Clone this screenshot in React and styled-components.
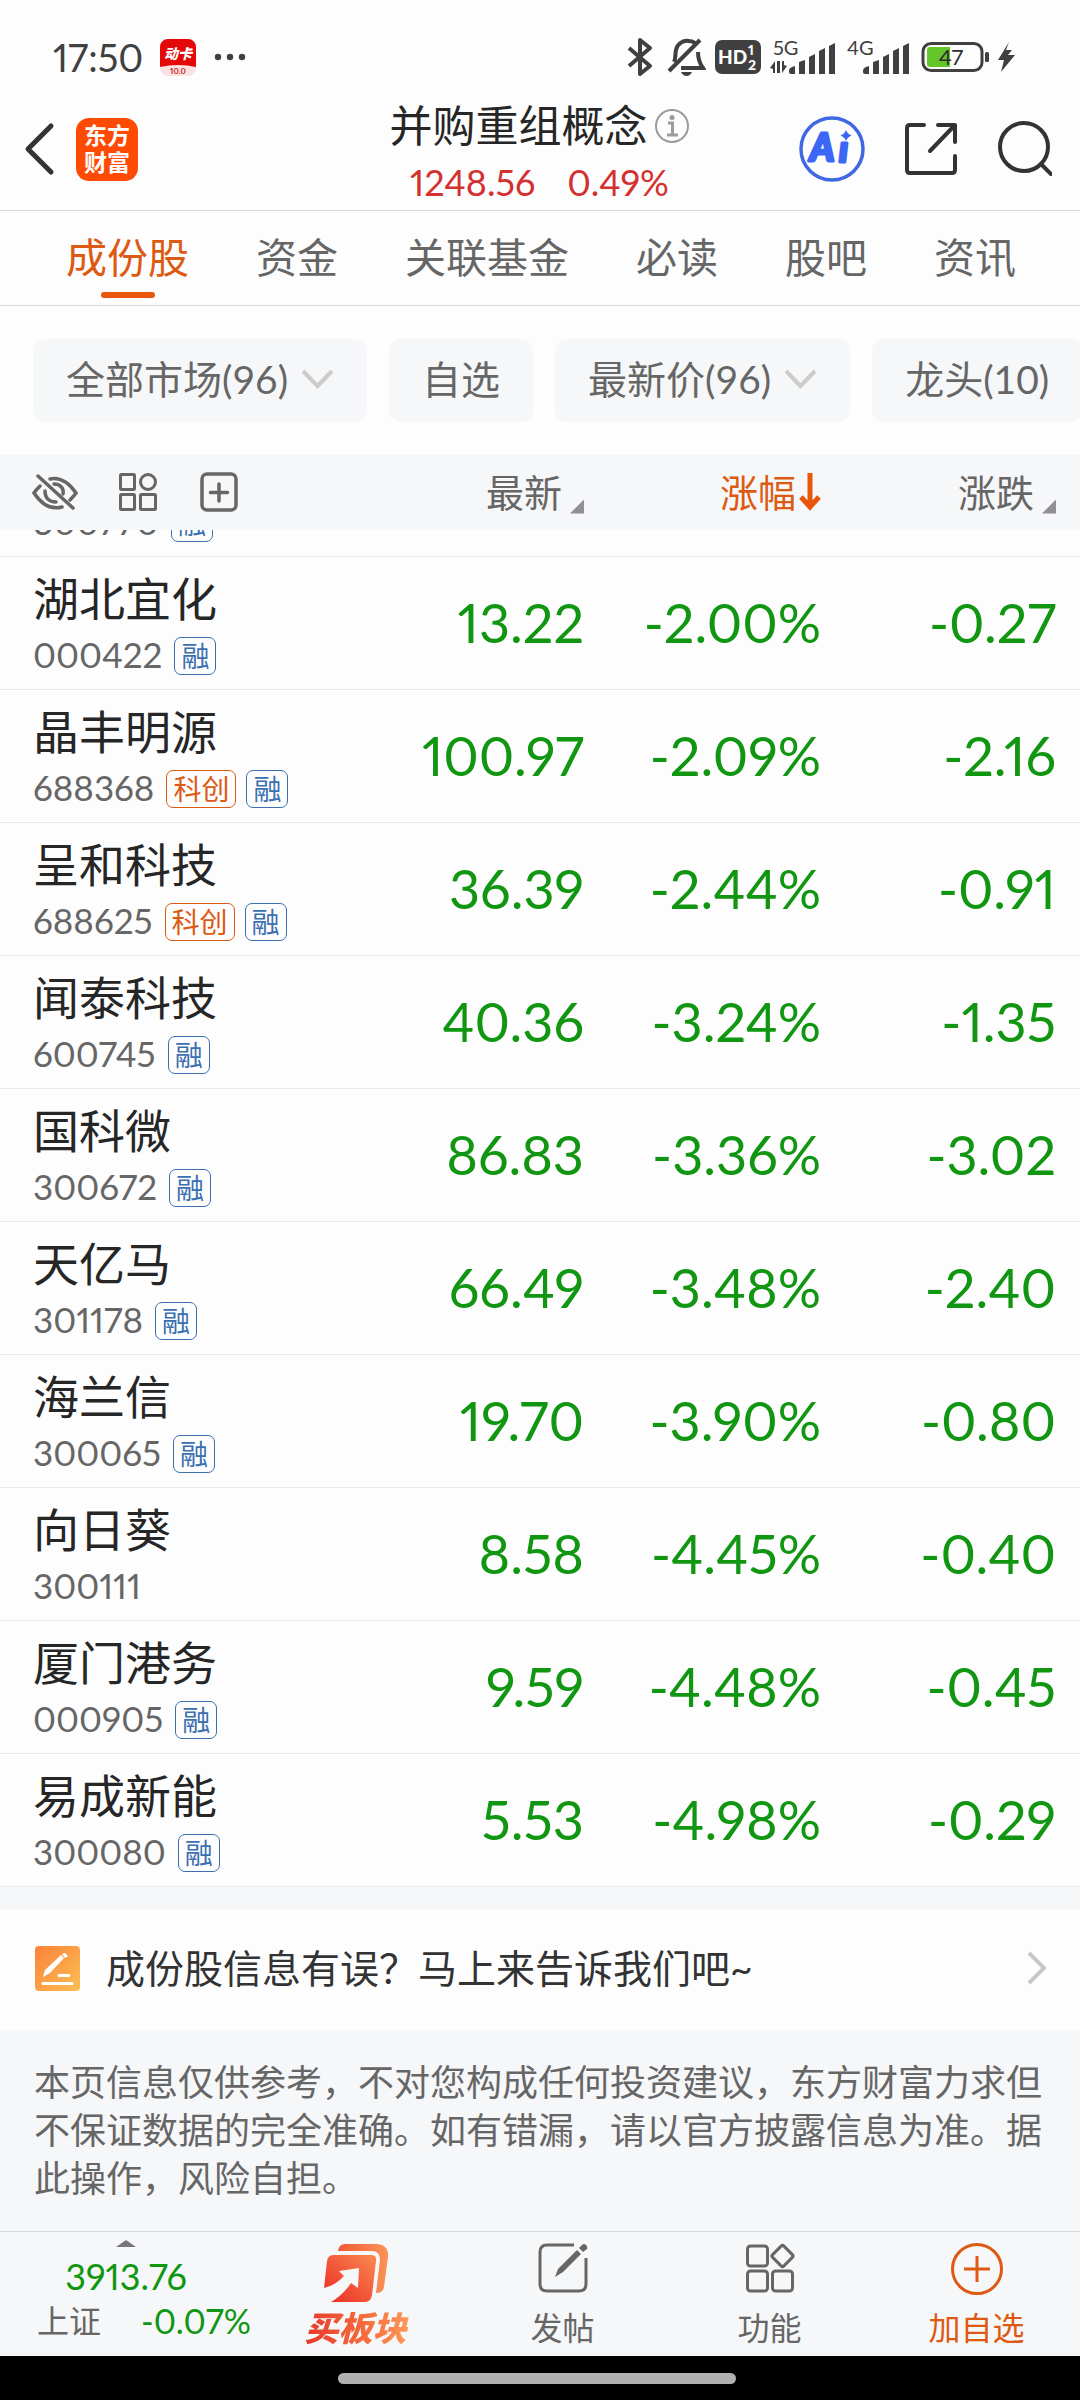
import React from "react";
import styled, { createGlobalStyle } from "styled-components";

const color = {
  ink: "#262626",
  gray: "#666666",
  line: "#d6d7d9",
  rowLine: "#e9eaec",
  panel: "#f6f7f9",
  orange: "#dd5a12",
  green: "#119611",
  red: "#d3302f",
  blue: "#3a6fb0",
  status: "#404040",
};

const GlobalStyle = createGlobalStyle`
  * { box-sizing: border-box; }
  body {
    margin: 0;
    background: #fdfdfe;
    color: ${color.ink};
    font-family: Lato, "Noto Sans CJK SC", sans-serif;
    font-variant-numeric: proportional-nums;
  }
  button {
    margin: 0;
    padding: 0;
    border: 0;
    background: none;
    color: inherit;
    font: inherit;
    font-variant-numeric: inherit;
    white-space: nowrap;
  }
  a { color: inherit; text-decoration: none; }
  svg { display: block; flex: none; }
`;

const Page = styled.div`
  width: 100%;
  overflow: hidden;
`;

/* ---------- status bar ---------- */

const StatusBar = styled.div`
  display: flex;
  justify-content: space-between;
  align-items: center;
  height: 90px;
  padding: 24px 64px 0 53px;
  color: ${color.status};
`;

const StatusGroup = styled.div`
  display: flex;
  align-items: center;
  gap: ${(p) => p.$gap}px;
`;

const Clock = styled.time`
  font-size: 38px;
  line-height: 40px;
`;

function StatusLeft() {
  return (
    <StatusGroup $gap={17}>
      <Clock>17:50</Clock>
      <svg width="36" height="37" viewBox="0 0 36 37">
        <rect width="36" height="37" rx="8" fill="#fbe3e3" />
        <path d="M8 0H28a8 8 0 0 1 8 8V28Q18 24 0 28V8a8 8 0 0 1 8-8Z" fill="#e40808" />
        <text x="18" y="20" fontSize="14" fontWeight="900" fontStyle="italic" fill="#fff" textAnchor="middle">动卡</text>
        <text x="18" y="35" fontSize="8" fontWeight="700" fill="#d01818" textAnchor="middle">10.0</text>
      </svg>
      <svg width="36" height="8" viewBox="0 0 36 8" fill={color.status}>
        <circle cx="5" cy="4" r="3.2" />
        <circle cx="17" cy="4" r="3.2" />
        <circle cx="29" cy="4" r="3.2" />
      </svg>
    </StatusGroup>
  );
}

function Signal({ label, busy }) {
  return (
    <svg width="66" height="48" viewBox="0 -6 66 48" fill={color.status}>
      <text x="3" y="16" fontSize="20">{label}</text>
      {busy && (
        <path d="M5 22v12h-2v-4l-3-1 5-7Zm2 0 3 0v12H7ZM12 34V22h2v4l3 1-5 7Z" />
      )}
      <path d="M19 32q0-3 3-4l3-1v8h-4q-2 0-2-2Z" />
      <path d="M29 23l6-2v14h-6Z" />
      <path d="M39 18l6-3v20h-6Z" />
      <path d="M49 12l6-3v26h-6Z" />
      <path d="M59 7l6-3v31h-6Z" />
    </svg>
  );
}

function StatusRight() {
  return (
    <StatusGroup $gap={8}>
      <svg width="32" height="40" viewBox="0 0 32 40" fill="none" stroke={color.status} strokeWidth="4" strokeLinejoin="round">
        <path d="M3 11 24 29 14 37V3L24 11 3 29" />
      </svg>
      <svg width="40" height="40" viewBox="0 0 40 40" fill="none" stroke={color.status} strokeWidth="4">
        <path d="M8 25C10 21 9 17 10 13c1-6 7-10 13-9 3 0 5 1 7 3M32 15c0 8 2 12 5 16H15" />
        <path d="M3 34 34 3" />
        <path d="M15 35h11q-2 4-5.500 4T15 35Z" fill={color.status} stroke="none" />
      </svg>
      <svg width="48" height="34" viewBox="0 0 48 34">
        <rect x="1" width="46" height="34" rx="7" fill={color.status} />
        <text x="4" y="24" fontSize="19" fontWeight="900" fill="#fff">HD</text>
        <text x="34" y="15" fontSize="14" fontWeight="900" fill="#fff">1</text>
        <text x="34" y="30" fontSize="14" fontWeight="900" fill="#fff">2</text>
      </svg>
      <Signal label="5G" busy />
      <Signal label="4G" />
      <svg width="98" height="34" viewBox="0 0 98 34">
        <rect x="5" y="3.500" width="59" height="27" rx="8" fill="none" stroke={color.status} strokeWidth="3" />
        <path d="M12 7H32V27H12q-3 0-3-3V10q0-3 3-3Z" fill="#63c62b" />
        <text x="33" y="25" fontSize="22" fill="#2c2c2c" textAnchor="middle">47</text>
        <rect x="67" y="12" width="4" height="10" rx="1.500" fill={color.status} />
        <path d="M91 2 80 20h6l-3 12 14-17h-7l4-5h-6Z" fill={color.status} />
      </svg>
    </StatusGroup>
  );
}

/* ---------- title bar ---------- */

const TitleBar = styled.header`
  display: grid;
  grid-template-columns: 1fr auto 1fr;
  align-items: center;
  height: 121px;
  padding: 0 28px 2px 24px;
  border-bottom: 1px solid ${color.line};
`;

const Tools = styled.div`
  display: flex;
  align-items: center;
  justify-content: ${(p) => (p.$end ? "flex-end" : "flex-start")};
  gap: ${(p) => (p.$end ? 38 : 20)}px;
`;

const BrandLogo = styled.span`
  display: grid;
  place-content: center;
  width: 62px;
  height: 63px;
  border-radius: 13px;
  background: #ff4a04;
  color: #fff;
  font-size: 23px;
  font-weight: 700;
  line-height: 27px;
  text-align: center;
`;

const TitleBlock = styled.div`
  display: flex;
  flex-direction: column;
  align-items: center;
  gap: 8px;
  padding: 2px 0 0 3px;
`;

const TitleLine = styled.div`
  display: flex;
  align-items: center;
  gap: 6px;
`;

const Title = styled.h1`
  margin: 0;
  font-size: 43px;
  font-weight: 400;
  line-height: 56px;
`;

const Quote = styled.div`
  display: flex;
  gap: 32px;
  color: ${color.red};
  font-size: 36px;
  line-height: 40px;
`;

function Header() {
  return (
    <TitleBar>
      <Tools>
        <button aria-label="返回">
          <svg width="32" height="56" viewBox="0 0 32 56" fill="none" stroke="#333" strokeWidth="5" strokeLinecap="round" strokeLinejoin="round">
            <path d="M27 5 4 28 27 51" />
          </svg>
        </button>
        <BrandLogo>东方<br />财富</BrandLogo>
      </Tools>
      <TitleBlock>
        <TitleLine>
          <Title>并购重组概念</Title>
          <button aria-label="说明">
            <svg width="36" height="36" viewBox="0 0 36 36" fill="none" stroke="#9b9b9b" strokeWidth="2">
              <circle cx="18" cy="18" r="16" />
              <circle cx="18" cy="9.500" r="2.500" fill="#9b9b9b" stroke="none" />
              <path d="M14 15h4.500v11M13 27h11" strokeWidth="3" />
            </svg>
          </button>
        </TitleLine>
        <Quote>
          <span>1248.56</span>
          <span>0.49%</span>
        </Quote>
      </TitleBlock>
      <Tools $end>
        <button aria-label="Ai">
          <svg width="68" height="68" viewBox="0 0 68 68">
            <circle cx="34" cy="34" r="31" fill="none" stroke="#4068e2" strokeWidth="3.500" />
            <g fill="#3c66f5" stroke="#3c66f5" strokeWidth="3" strokeLinejoin="round" fontWeight="900" fontStyle="italic">
              <text x="12" y="46" fontSize="37">A</text>
              <text x="41" y="47" fontSize="36">ı</text>
            </g>
            <path d="M48 15q1.500 4 5.500 5.500-4 1.500-5.500 5.500-1.500-4-5.500-5.500 4-1.500 5.500-5.500Z" fill="#3c66f5" />
          </svg>
        </button>
        <button aria-label="分享">
          <svg width="54" height="54" viewBox="0 0 54 54" fill="none" stroke="#333" strokeWidth="4" strokeLinecap="round" strokeLinejoin="round">
            <path d="M20 3H6q-3 0-3 3V48q0 3 3 3H48q3 0 3-3V34" />
            <path d="M34 3H51V20M51 3 26 29" />
          </svg>
        </button>
        <button aria-label="搜索">
          <svg width="56" height="56" viewBox="0 0 56 56" fill="none" stroke="#333" strokeWidth="4" strokeLinecap="round">
            <circle cx="28" cy="26" r="24" />
            <path d="M45 43 55 53" />
          </svg>
        </button>
      </Tools>
    </TitleBar>
  );
}

/* ---------- tabs and filters ---------- */

const TabBar = styled.nav`
  display: flex;
  gap: 67px;
  padding: 18px 66px 7px;
  border-bottom: 1px solid ${color.line};
`;

const Tab = styled.button`
  display: flex;
  flex-direction: column;
  align-items: center;
  gap: 5px;
  color: ${(p) => (p.$active ? color.orange : color.gray)};
  font-size: 41px;
  line-height: 58px;

  &::after {
    content: "";
    width: 54px;
    height: 6px;
    border-radius: 3px;
    background: ${(p) => (p.$active ? "#e8560a" : "transparent")};
  }
`;

const FilterBar = styled.div`
  display: flex;
  gap: 22px;
  padding: 33px 0 33px 33px;
  overflow: hidden;
`;

const Chip = styled.button`
  display: flex;
  flex: none;
  align-items: center;
  gap: 13px;
  height: 83px;
  padding: 0 33px 3px;
  border-radius: 12px;
  background: ${color.panel};
  color: ${color.gray};
  font-size: 39px;
  font-variant-numeric: tabular-nums;
  line-height: 48px;
`;

const TABS = ["成份股", "资金", "关联基金", "必读", "股吧", "资讯"];
const FILTERS = [
  { label: "全部市场(96)", menu: true },
  { label: "自选" },
  { label: "最新价(96)", menu: true },
  { label: "龙头(10)" },
];

/* ---------- stock table ---------- */

const Table = styled.table`
  width: 100%;
  border-spacing: 0;
  table-layout: fixed;
`;

const Col = styled.col`
  width: ${(p) => p.$width};
`;

const HeadCell = styled.th`
  height: 75px;
  padding: 0 ${(p) => (p.$last ? 24 : 0)}px 2px ${(p) => (p.$first ? 32 : 0)}px;
  background: ${color.panel};
  color: ${color.gray};
  font-size: 38px;
  font-weight: 400;
`;

const HeadTools = styled.div`
  display: flex;
  align-items: center;
  gap: 41px;
`;

const SortButton = styled.button`
  display: flex;
  align-items: center;
  justify-content: flex-end;
  gap: ${(p) => (p.$active ? 3 : 8)}px;
  width: 100%;
  color: ${(p) => (p.$active ? color.orange : color.gray)};
  line-height: 44px;
`;

const SortCorner = styled.span`
  align-self: flex-end;
  width: 14px;
  height: 14px;
  background: #8f8f94;
  clip-path: polygon(100% 0, 100% 100%, 0 100%);
`;

const Cell = styled.td`
  padding: 0 ${(p) => (p.$last ? 24 : 0)}px 0 ${(p) => (p.$first ? 33 : 0)}px;
  border-bottom: 1px solid ${color.rowLine};
`;

const Price = styled(Cell)`
  color: ${color.green};
  font-size: 54px;
  line-height: 64px;
  text-align: right;
`;

const Peek = styled.div`
  display: flex;
  align-items: flex-end;
  height: 26px;
  overflow: hidden;
`;

const Stock = styled.div`
  display: flex;
  flex-direction: column;
  gap: 11px;
  padding: 15px 0 14px;
`;

const StockName = styled.span`
  font-size: 46px;
  line-height: 54px;
`;

const StockMeta = styled.div`
  display: flex;
  align-items: flex-start;
  gap: 10px;
  height: 38px;
`;

const Code = styled.span`
  padding-right: 2px;
  color: ${color.gray};
  font-size: 35px;
  line-height: 34px;
`;

const Badge = styled.span`
  padding: 0 6px;
  border: 1px solid;
  border-radius: 7px;
  color: ${(p) => (p.$orange ? color.orange : color.blue)};
  font-size: 28px;
  line-height: 36px;
`;

const STOCKS = [
  ["湖北宜化", "000422", ["融"], "13.22", "-2.00%", "-0.27"],
  ["晶丰明源", "688368", ["科创", "融"], "100.97", "-2.09%", "-2.16"],
  ["呈和科技", "688625", ["科创", "融"], "36.39", "-2.44%", "-0.91"],
  ["闻泰科技", "600745", ["融"], "40.36", "-3.24%", "-1.35"],
  ["国科微", "300672", ["融"], "86.83", "-3.36%", "-3.02"],
  ["天亿马", "301178", ["融"], "66.49", "-3.48%", "-2.40"],
  ["海兰信", "300065", ["融"], "19.70", "-3.90%", "-0.80"],
  ["向日葵", "300111", [], "8.58", "-4.45%", "-0.40"],
  ["厦门港务", "000905", ["融"], "9.59", "-4.48%", "-0.45"],
  ["易成新能", "300080", ["融"], "5.53", "-4.98%", "-0.29"],
];

function StockLabel({ name, code, tags }) {
  return (
    <Stock>
      {name && <StockName>{name}</StockName>}
      <StockMeta>
        <Code>{code}</Code>
        {tags.map((tag) => (
          <Badge key={tag} $orange={tag === "科创"}>{tag}</Badge>
        ))}
      </StockMeta>
    </Stock>
  );
}

function StockTable() {
  return (
    <Table>
      <colgroup>
        <Col $width="auto" />
        <Col $width="237px" />
        <Col $width="237px" />
        <Col $width="259px" />
      </colgroup>
      <thead>
        <tr>
          <HeadCell $first>
            <HeadTools>
              <button aria-label="隐藏">
                <svg width="46" height="40" viewBox="0 0 46 40" fill="none" stroke={color.gray} strokeWidth="3.500" strokeLinecap="round">
                  <path d="M18 7c10-2 19 4 26 14-2 3-4 5-6 7M8 14c-2 2-4 4-6 7 8 12 17 17 28 14" />
                  <path d="M22 12c7 0 10 5 9 10M13 19c0 7 4 11 11 11" />
                  <path d="M6 4 41 36" />
                </svg>
              </button>
              <button aria-label="宫格">
                <svg width="40" height="40" viewBox="3 0 40 40" fill="none" stroke={color.gray} strokeWidth="3">
                  <rect x="4.500" y="2.500" width="14" height="15" rx="1" />
                  <circle cx="32" cy="10" r="7.500" />
                  <rect x="4.500" y="22.500" width="14" height="15" rx="1" />
                  <rect x="24.500" y="22.500" width="15" height="15" rx="1" />
                </svg>
              </button>
              <button aria-label="添加列">
                <svg width="40" height="40" viewBox="3 0 40 40" fill="none" stroke={color.gray} strokeWidth="3.500" strokeLinecap="round">
                  <rect x="5" y="2" width="34" height="36" rx="5" />
                  <path d="M22 12V29M13.500 20.500H30.500" />
                </svg>
              </button>
            </HeadTools>
          </HeadCell>
          <HeadCell>
            <SortButton>最新<SortCorner /></SortButton>
          </HeadCell>
          <HeadCell>
            <SortButton $active>
              涨幅
              <svg width="22" height="40" viewBox="0 0 22 40" fill="none" stroke="#e8560a" strokeWidth="5">
                <path d="M11 1V35M2 25 11 35 20 25" />
              </svg>
            </SortButton>
          </HeadCell>
          <HeadCell $last>
            <SortButton>涨跌<SortCorner /></SortButton>
          </HeadCell>
        </tr>
      </thead>
      <tbody>
        <tr>
          <Cell $first colSpan={4}>
            <Peek>
              <StockLabel code="300770" tags={["融"]} />
            </Peek>
          </Cell>
        </tr>
        {STOCKS.map(([name, code, tags, price, percent, change]) => (
          <tr key={code}>
            <Cell $first>
              <StockLabel name={name} code={code} tags={tags} />
            </Cell>
            <Price>{price}</Price>
            <Price>{percent}</Price>
            <Price $last>{change}</Price>
          </tr>
        ))}
      </tbody>
    </Table>
  );
}

/* ---------- notice and disclaimer ---------- */

const Notice = styled.a`
  display: flex;
  align-items: center;
  gap: 26px;
  height: 143px;
  padding: 0 33px 3px 35px;
  border-top: 22px solid ${color.panel};
  color: #333;
  font-size: 39px;
  line-height: 48px;
`;

const NoticeText = styled.span`
  flex: 1;
`;

const Disclaimer = styled.p`
  margin: 0;
  padding: 28px 34px 29px;
  background: ${color.panel};
  color: ${color.gray};
  font-size: 36px;
  line-height: 48px;
`;

/* ---------- bottom bar ---------- */

const BottomBar = styled.nav`
  display: grid;
  grid-template-columns: 252px repeat(4, 1fr);
  height: 125px;
  border-top: 1px solid ${color.line};
  background: ${color.panel};
`;

const IndexPanel = styled.button`
  display: flex;
  flex-direction: column;
  align-items: center;
  padding-top: 8px;
  color: ${color.green};
  font-size: 36px;
  line-height: 40px;
`;

const IndexCaret = styled.span`
  width: 20px;
  height: 7px;
  margin-bottom: 9px;
  background: #77777b;
  clip-path: polygon(50% 0, 100% 100%, 0 100%);
`;

const IndexLine = styled.span`
  display: flex;
  gap: 40px;
  margin-top: 5px;
  padding-left: 36px;
  font-size: 34px;
`;

const IndexName = styled.span`
  color: ${color.gray};
  font-size: 32px;
`;

const Action = styled.button`
  display: flex;
  flex-direction: column;
  align-items: center;
  gap: 7px;
  padding-top: 11px;
  color: ${(p) => (p.$accent ? color.orange : color.gray)};
  font-size: 32px;
  line-height: 40px;
`;

const ActionIcon = styled.span`
  height: 58px;
`;

const BuyLabel = styled.span`
  padding: 0 4px;
  background: linear-gradient(90deg, #e8352b, #f5693c 55%, #ff9a5a);
  background-clip: text;
  color: transparent;
  font-size: 34px;
  font-style: italic;
  font-weight: 900;
`;

const GestureBar = styled.div`
  display: grid;
  justify-items: center;
  height: 44px;
  padding: 17px 6px 0 0;
  background: #000;

  &::after {
    content: "";
    width: 37%;
    height: 11px;
    border-radius: 6px;
    background: #b0b0b0;
  }
`;

function BottomNav() {
  return (
    <BottomBar>
      <IndexPanel>
        <IndexCaret />
        <span>3913.76</span>
        <IndexLine>
          <IndexName>上证</IndexName>
          <span>-0.07%</span>
        </IndexLine>
      </IndexPanel>
      <Action>
        <ActionIcon>
          <svg width="66" height="60" viewBox="0 0 66 60">
            <defs>
              <linearGradient id="buyBack" x1="0" y1="0" x2="1" y2="0">
                <stop offset="0" stopColor="#ef5a38" />
                <stop offset="1" stopColor="#fb9355" />
              </linearGradient>
              <linearGradient id="buyFront" x1="0" y1="1" x2="1" y2="0">
                <stop offset="0" stopColor="#ea2a26" />
                <stop offset="1" stopColor="#fa8a50" />
              </linearGradient>
            </defs>
            <path d="M15 8Q16 1 22 1H54Q66 2 65 14L61 44Q60 50 53 50L57 17Q57 8 49 8Z" fill="url(#buyBack)" />
            <path d="M10 12H48Q54 12 53 18L49 52Q48 59 42 59H8Q20 52 28 40L35 45 36 25 16 28 21 33Q13 42 1 45L4 18Q5 12 10 12Z" fill="url(#buyFront)" />
          </svg>
        </ActionIcon>
        <BuyLabel>买板块</BuyLabel>
      </Action>
      <Action>
        <ActionIcon>
          <svg width="50" height="50" viewBox="0 0 50 50" fill="none" stroke={color.gray} strokeWidth="3">
            <path d="M36 2H9Q2 2 2 9V41q0 7 7 7H41q7 0 7-7V15" />
            <path d="M17 34 20 26 39 7 43 11 25 29ZM41 5 44 2q2-2 4 0t1 4L45 9Z" fill={color.gray} stroke="none" />
          </svg>
        </ActionIcon>
        发帖
      </Action>
      <Action>
        <ActionIcon>
          <svg width="50" height="50" viewBox="0 0 50 50" fill="none" stroke={color.gray} strokeWidth="3">
            <rect x="2.500" y="3" width="20" height="20" rx="3" />
            <rect x="2.500" y="28" width="20" height="20" rx="3" />
            <rect x="27.500" y="28" width="20" height="20" rx="3" />
            <rect x="29.500" y="5" width="16" height="16" rx="2" transform="rotate(45 37.500 13)" />
          </svg>
        </ActionIcon>
        功能
      </Action>
      <Action $accent>
        <ActionIcon>
          <svg width="52" height="52" viewBox="0 0 52 52" fill="none" stroke={color.orange} strokeWidth="3">
            <circle cx="26" cy="26" r="24.500" />
            <path d="M26 13V39M13 26H39" />
          </svg>
        </ActionIcon>
        加自选
      </Action>
    </BottomBar>
  );
}

export default function App() {
  return (
    <Page>
      <GlobalStyle />
      <StatusBar>
        <StatusLeft />
        <StatusRight />
      </StatusBar>
      <Header />
      <TabBar>
        {TABS.map((label, i) => (
          <Tab key={label} $active={i === 0}>{label}</Tab>
        ))}
      </TabBar>
      <FilterBar>
        {FILTERS.map(({ label, menu }) => (
          <Chip key={label}>
            {label}
            {menu && (
              <svg width="33" height="20" viewBox="0 0 33 20" fill="none" stroke="#cccccc" strokeWidth="4">
                <path d="M2 2 16.500 17 31 2" />
              </svg>
            )}
          </Chip>
        ))}
      </FilterBar>
      <StockTable />
      <Notice href="#feedback">
        <svg width="45" height="45" viewBox="0 0 45 45">
          <defs>
            <linearGradient id="note" x1="0" y1="0" x2="1" y2="1">
              <stop offset="0" stopColor="#fb8238" />
              <stop offset="1" stopColor="#fbbf55" />
            </linearGradient>
          </defs>
          <rect width="45" height="45" rx="4" fill="url(#note)" />
          <path d="M8 31 10 24 26 9 29 12 15 27ZM27 8 30 7 33 10 30 12Z" fill="#fff" />
          <path d="M24 29.500H34M8 37.500H37" stroke="#fff" strokeWidth="3" strokeLinecap="round" />
        </svg>
        <NoticeText>成份股信息有误？马上来告诉我们吧~</NoticeText>
        <svg width="20" height="34" viewBox="0 0 20 34" fill="none" stroke="#c8c8c8" strokeWidth="4">
          <path d="M2 2 17 17 2 32" />
        </svg>
      </Notice>
      <Disclaimer>
        本页信息仅供参考，不对您构成任何投资建议，东方财富力求但不保证数据的完全准确。如有错漏，请以官方披露信息为准。据此操作，风险自担。
      </Disclaimer>
      <BottomNav />
      <GestureBar />
    </Page>
  );
}
